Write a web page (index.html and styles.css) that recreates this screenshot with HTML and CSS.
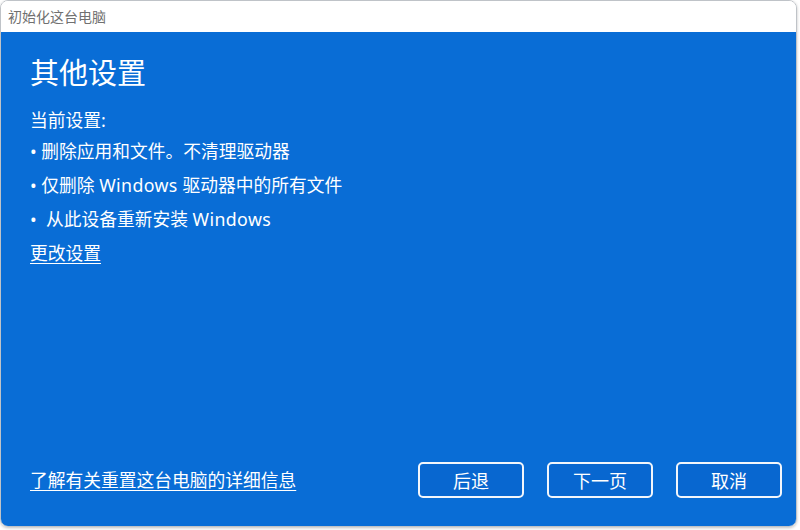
FILE: index.html
```html
<!DOCTYPE html>
<html lang="zh-CN">
<head>
<meta charset="utf-8">
<title>初始化这台电脑</title>
<link rel="stylesheet" href="styles.css">
</head>
<body>
<div class="window">
  <div class="titlebar">初始化这台电脑</div>
  <div class="main">
    <div class="content">
      <h1 class="heading">其他设置</h1>
      <div class="label">当前设置:</div>
      <ul class="settings">
        <li>• 删除应用和文件。不清理驱动器</li>
        <li>• 仅删除 <span class="latin">Windows</span> 驱动器中的所有文件</li>
        <li>•&nbsp; 从此设备重新安装 <span class="latin">Windows</span></li>
      </ul>
      <a class="link change" href="#">更改设置</a>
    </div>
    <div class="footer">
      <a class="link" href="#">了解有关重置这台电脑的详细信息</a>
      <div class="buttons">
        <button class="btn">后退</button>
        <button class="btn">下一页</button>
        <button class="btn">取消</button>
      </div>
    </div>
  </div>
</div>
</body>
</html>
```

FILE: styles.css
```css
html, body {
  margin: 0;
  padding: 0;
  background: #ffffff;
}
body {
  font-family: "Noto Sans", "Noto Sans CJK SC", sans-serif;
  width: 800px;
  height: 530px;
}
.window {
  box-sizing: border-box;
  width: 797px;
  height: 527px;
  border: 1px solid #bfc3c8;
  border-radius: 8px;
  overflow: hidden;
  display: flex;
  flex-direction: column;
  box-shadow: 0 1px 3px rgba(0,0,0,0.25);
}
.titlebar {
  height: 31px;
  line-height: 30px;
  background: #ffffff;
  color: #707070;
  font-size: 14px;
  padding-left: 7px;
  font-family: "Noto Sans CJK SC", sans-serif;
}
.main {
  flex: 1;
  background: #096dd6;
  color: #ffffff;
  display: flex;
  flex-direction: column;
  justify-content: space-between;
  padding: 23px 14px 28px 29px;
}
.content {
  display: flex;
  flex-direction: column;
  align-items: flex-start;
}
.heading {
  margin: 0;
  font-size: 29px;
  line-height: 36px;
  font-weight: normal;
}
.label {
  margin-top: 15px;
  font-size: 17.75px;
  line-height: 28px;
}
.settings {
  list-style: none;
  margin: 0;
  padding: 0;
  font-size: 17.75px;
  line-height: 34px;
}
.latin {
  letter-spacing: 0.4px;
}
.link {
  color: #ffffff;
  font-size: 17.75px;
  line-height: 34px;
  text-decoration: underline;
  text-decoration-thickness: 1px;
  text-underline-offset: 3px;
}
.footer {
  display: flex;
  align-items: center;
  justify-content: space-between;
}
.buttons {
  display: flex;
  gap: 23px;
}
.btn {
  box-sizing: border-box;
  width: 106px;
  height: 36px;
  border: 2px solid #f2f6fb;
  border-radius: 5px;
  background: #0867d0;
  color: #ffffff;
  font-family: "Noto Sans CJK SC", sans-serif;
  font-size: 18px;
  padding: 0;
}
```
